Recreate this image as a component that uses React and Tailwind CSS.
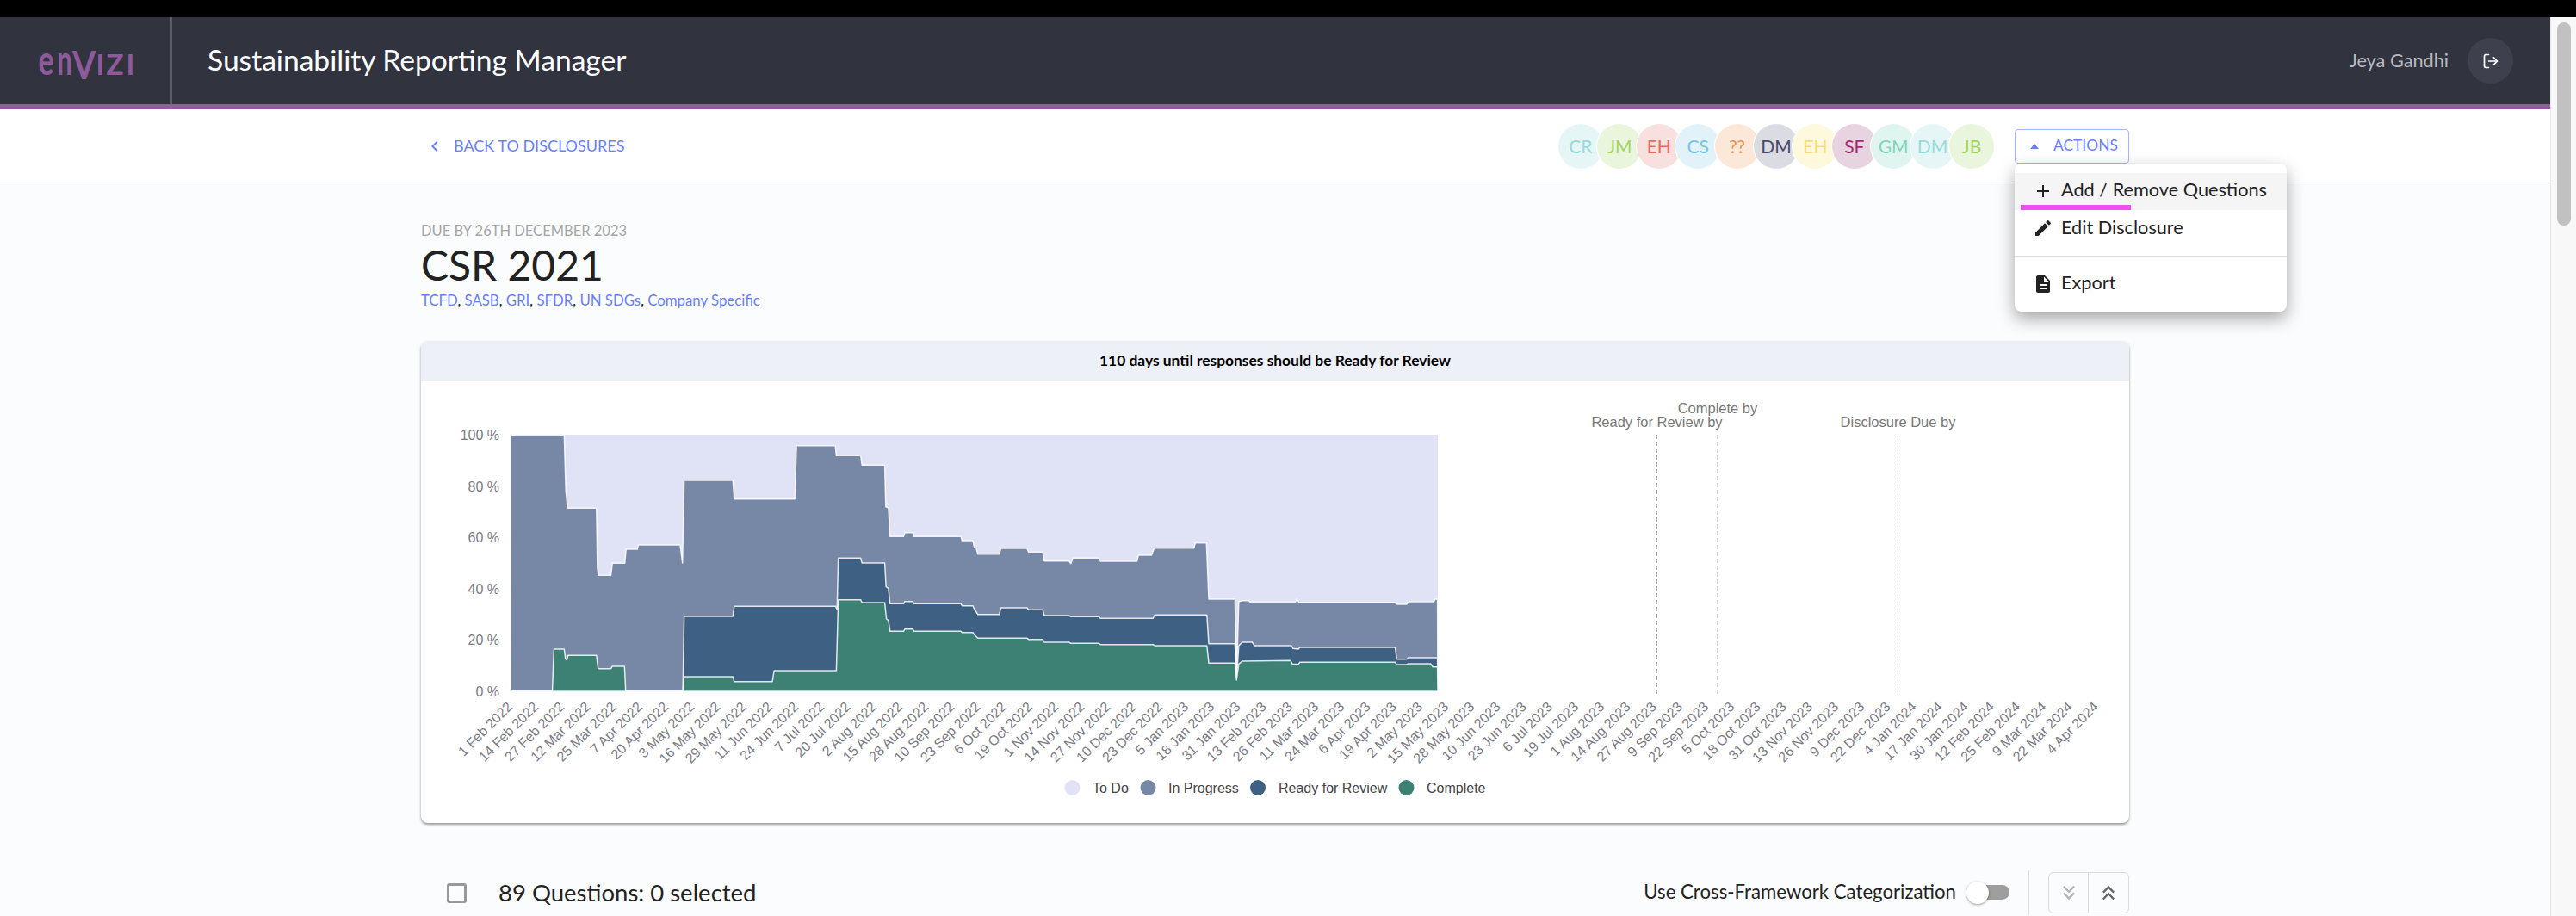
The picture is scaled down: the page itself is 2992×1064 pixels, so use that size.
import React from 'react';
import { LogOut } from 'lucide-react';
import { MdAdd, MdEdit, MdDescription, MdChevronLeft, MdKeyboardDoubleArrowDown, MdKeyboardDoubleArrowUp } from 'react-icons/md';

const avatars = [
    { initials: 'CR', className: 'bg-[#e6f6f7] text-[#95dbd9]' },
    { initials: 'JM', className: 'bg-[#e9f5dc] text-[#a2d45e]' },
    { initials: 'EH', className: 'bg-[#f7e0de] text-[#e96b5f]' },
    { initials: 'CS', className: 'bg-[#e1f2f8] text-[#77c4e4]' },
    { initials: '??', className: 'bg-[#fbe8d8] text-[#ef8e4c]' },
    { initials: 'DM', className: 'bg-[#dbdbe3] text-[#4a4a6a]' },
    { initials: 'EH', className: 'bg-[#fef8dd] text-[#fbdc7c]' },
    { initials: 'SF', className: 'bg-[#e8d3e0] text-[#a32a6f]' },
    { initials: 'GM', className: 'bg-[#e1f5f0] text-[#7fd6b8]' },
    { initials: 'DM', className: 'bg-[#e6f6f7] text-[#95dbd9]' },
    { initials: 'JB', className: 'bg-[#e9f5dc] text-[#a2d45e]' },
];

const frameworks = ['TCFD', 'SASB', 'GRI', 'SFDR', 'UN SDGs', 'Company Specific'];

// chart traces, measured off the picture; the first list of each runs up to mid Aug 2022
const left = ([x, y]) => [480 + x / 2.613, 480 + y / 3];
const right = ([x, y]) => [1000 + x / 2.24, 480 + y / 3];

const trace = (a, b) => [...a.map(left), ...b.map(right)];

const inProgress = trace(
    [[295, 76], [458, 76], [463, 270], [468, 331], [556, 331], [559, 540], [562, 565], [600, 565], [604, 523], [642, 523], [646, 474], [680, 474], [683, 459], [810, 459], [817, 522], [822, 234], [970, 234], [974, 299], [1158, 299], [1163, 113], [1281, 113], [1284, 148], [1358, 148], [1362, 181], [1431, 181], [1434, 326], [1442, 330], [1447, 430], [1488, 430], [1492, 416], [1516, 416], [1520, 430]],
    [[260, 430], [263, 444], [291, 444], [295, 468], [300, 470], [304, 491], [360, 491], [364, 471], [432, 471], [436, 484], [473, 484], [477, 515], [541, 515], [546, 524], [551, 505], [619, 505], [623, 516], [718, 516], [722, 495], [756, 495], [763, 470], [866, 470], [870, 452], [899, 452], [905, 648], [973, 648], [977, 930], [983, 657], [992, 653], [1008, 653], [1012, 658], [1130, 658], [1134, 648], [1140, 659], [1390, 659], [1394, 666], [1420, 666], [1424, 657], [1490, 657], [1494, 648], [1500, 648]]
);

const readyForReview = trace(
    [[295, 970], [818, 970], [822, 708], [970, 708], [974, 673], [1282, 673], [1286, 685], [1290, 505], [1358, 505], [1362, 522], [1431, 522], [1435, 605], [1442, 610], [1447, 664], [1488, 664], [1492, 656], [1516, 656], [1520, 664]],
    [[260, 664], [263, 671], [291, 671], [295, 682], [304, 701], [360, 701], [364, 678], [432, 678], [436, 685], [473, 685], [477, 705], [541, 705], [546, 709], [619, 709], [623, 715], [760, 715], [764, 703], [900, 703], [905, 803], [973, 803], [977, 930], [983, 810], [992, 798], [1018, 798], [1024, 810], [1120, 810], [1124, 820], [1138, 822], [1142, 816], [1390, 816], [1394, 857], [1420, 857], [1424, 852], [1500, 852]]
);

const complete = trace(
    [[295, 970], [422, 970], [427, 822], [458, 822], [462, 855], [466, 860], [470, 844], [556, 844], [561, 890], [600, 890], [604, 882], [641, 882], [645, 970], [818, 970], [822, 918], [970, 918], [974, 935], [1090, 935], [1095, 897], [1284, 897], [1290, 650], [1358, 650], [1362, 660], [1431, 660], [1436, 717], [1442, 722], [1447, 760], [1488, 760], [1492, 752], [1516, 752], [1520, 760]],
    [[260, 760], [263, 764], [291, 764], [295, 772], [304, 784], [432, 784], [436, 788], [473, 788], [477, 798], [541, 798], [546, 802], [619, 802], [623, 806], [760, 806], [764, 810], [900, 810], [905, 871], [973, 871], [977, 930], [983, 874], [992, 864], [1118, 862], [1122, 874], [1138, 875], [1142, 868], [1390, 868], [1394, 876], [1420, 876], [1424, 873], [1482, 873], [1488, 884], [1500, 884]]
);

const areaPath = (points) =>
    `M${points.map(([x, y]) => `${x.toFixed(1)} ${y.toFixed(1)}`).join('L')}L1670 803L593 803Z`;

const series = [
    { name: 'In Progress', color: '#7787a6', points: inProgress },
    { name: 'Ready for Review', color: '#3d6083', points: readyForReview },
    { name: 'Complete', color: '#3c8174', points: complete },
];

const legend = [
    { name: 'To Do', color: '#e0e3f5', cx: 1245.5, tx: 1269 },
    { name: 'In Progress', color: '#7787a6', cx: 1333.5, tx: 1357 },
    { name: 'Ready for Review', color: '#3d6083', cx: 1461, tx: 1485 },
    { name: 'Complete', color: '#3c8174', cx: 1633.5, tx: 1657 },
];

const deadlines = [
    { name: 'Ready for Review by', x: 1924.5, y: 496 },
    { name: 'Complete by', x: 1995, y: 480 },
    { name: 'Disclosure Due by', x: 2204.5, y: 496 },
];

const MONTHS = ['Jan', 'Feb', 'Mar', 'Apr', 'May', 'Jun', 'Jul', 'Aug', 'Sep', 'Oct', 'Nov', 'Dec'];

// one label every 13 days from 1 Feb 2022
const ticks = Array.from({ length: 62 }, (_, i) => {
    const d = new Date(Date.UTC(2022, 1, 1 + i * 13));
    return `${d.getUTCDate()} ${MONTHS[d.getUTCMonth()]} ${d.getUTCFullYear()}`;
});

const Chart = () => (
    <svg viewBox="489 442 1984 514" className="block w-full h-[514px] font-['Liberation_Sans',sans-serif] text-[16px]">
        <rect x="593" y="505" width="1077" height="298" fill="#e0e3f5" />
        {series.map(s => (
            <path key={s.name} d={areaPath(s.points)} fill={s.color} stroke="#fff" strokeOpacity="0.85" strokeWidth="1.5" strokeLinejoin="round" />
        ))}
        {[0, 20, 40, 60, 80, 100].map(v => (
            <text key={v} x="580" y={803 - v * 2.98 + 6} textAnchor="end" fill="#7b7b85">{v} %</text>
        ))}
        {ticks.map((label, i) => {
            const x = 596 + i * 30.2;
            return (
                <text key={label} x={x} y="822" textAnchor="end" fill="#7b7b85" transform={`rotate(-45 ${x} 822)`}>{label}</text>
            );
        })}
        {deadlines.map(d => (
            <g key={d.name}>
                <line x1={d.x} x2={d.x} y1="505" y2="806" stroke="#a8a8a8" strokeWidth="1" strokeDasharray="5 3" />
                <text x={d.x} y={d.y} textAnchor="middle" fill="#777" className="text-[16.5px]">{d.name}</text>
            </g>
        ))}
        {legend.map(l => (
            <g key={l.name}>
                <circle cx={l.cx} cy="915" r="9" fill={l.color} />
                <text x={l.tx} y="921" fill="#444">{l.name}</text>
            </g>
        ))}
    </svg>
);

const Logo = () => (
    <div className="w-[198px] h-full flex items-baseline pl-[43px] pt-[26px] text-[#8e5a9c] font-bold leading-none">
        <span className="w-[21px] flex justify-center text-[47px] scale-x-[0.72]">e</span>
        <span className="w-[22px] flex justify-center text-[47px] scale-x-[0.65]">n</span>
        <span className="w-[23px] flex justify-center text-[46px] scale-x-[0.85] translate-y-[5px]">V</span>
        <span className="w-[15px] flex justify-center text-[33px]">I</span>
        <span className="w-[19px] flex justify-center text-[33px]">Z</span>
        <span className="w-[17px] flex justify-center text-[33px]">I</span>
    </div>
);

const App = () => {
    return (
        <div className="w-[2992px] h-[1064px] overflow-hidden flex flex-col bg-black font-['Lato',sans-serif]">
            <div className="h-[20px] shrink-0 bg-black"></div>
            <div className="flex-1 min-h-0 flex">
                <div className="w-[2962px] flex flex-col overflow-hidden bg-[#fbfcfe]">
                    {/* Top bar */}
                    <header className="h-[107px] shrink-0 bg-[#31333f] border-b-[6px] border-[#925d9d] flex items-center">
                        <Logo />
                        <div className="w-[2px] h-full bg-[#5a5c68]"></div>
                        <h1 className="ml-[41px] -mt-[2px] text-[33.6px] text-white font-normal">Sustainability Reporting Manager</h1>
                        <span className="ml-auto -mt-[1px] text-[21.7px] text-[#b8bac0]">Jeya Gandhi</span>
                        <button className="ml-[22px] mr-[43px] w-[53px] h-[53px] rounded-full bg-[#3f404d] flex items-center justify-center">
                            <LogOut size={20} color="#fff" strokeWidth={2} />
                        </button>
                    </header>

                    {/* Sub navigation */}
                    <div className="h-[86px] shrink-0 bg-white border-b border-[#e2e2e2]">
                        <div className="w-[1984px] h-full mx-auto flex items-center">
                            <a className="flex items-center text-[18px] text-[#6a80ff] pl-[6px]">
                                <MdChevronLeft size={24} className="-ml-[2px]" />
                                <span className="ml-[10px]">BACK TO DISCLOSURES</span>
                            </a>
                            <div className="ml-auto flex items-center">
                                {avatars.map((a, i) => (
                                    <div
                                        key={i}
                                        className={`w-[52px] h-[52px] -ml-[6.6px] rounded-full flex items-center justify-center text-[21px] ring-1 ring-white ${a.className}`}
                                    >
                                        {a.initials}
                                    </div>
                                ))}
                            </div>
                            <div className="relative ml-[24px]">
                                <button className="w-[133px] h-[40px] border border-[#a5b2ff] rounded-[4px] flex items-center text-[17.4px] text-[#6a80ff] bg-white">
                                    <span className="ml-[17px] w-0 h-0 border-x-[5px] border-x-transparent border-b-[6px] border-b-[#6a80ff]"></span>
                                    <span className="ml-[17px]">ACTIONS</span>
                                </button>
                                <div className="absolute top-full left-0 z-10 w-[316px] h-[172px] bg-white rounded-[8px] shadow-[0_8px_20px_rgba(0,0,0,0.35)] pt-[11px] text-[21.7px] text-[#222]">
                                    <div className="relative h-[43px] bg-[#f5f5f5] flex items-center pl-[21px]">
                                        <MdAdd size={24} />
                                        <span className="ml-[9px] -mt-[3px]">Add / Remove Questions</span>
                                        <div className="absolute left-[7px] bottom-0 w-[128px] h-[6px] bg-[#ef4fef]"></div>
                                    </div>
                                    <div className="h-[43px] flex items-center pl-[21px]">
                                        <MdEdit size={24} />
                                        <span className="ml-[9px] -mt-[2px]">Edit Disclosure</span>
                                    </div>
                                    <div className="h-px mt-[10px] bg-[#e0e0e0]"></div>
                                    <div className="h-[43px] mt-[11px] flex items-center pl-[21px]">
                                        <MdDescription size={24} />
                                        <span className="ml-[9px] -mt-[3px]">Export</span>
                                    </div>
                                </div>
                            </div>
                        </div>
                    </div>

                    {/* Body */}
                    <main className="w-[1984px] mx-auto pt-[43px]">
                        <p className="h-[24px] leading-[24px] text-[16.5px] text-[#a5a5a5]">DUE BY 26TH DECEMBER 2023</p>
                        <h2 className="h-[56px] leading-[56px] text-[48px] text-[#222] font-normal">CSR 2021</h2>
                        <p className="h-[28px] leading-[26px] text-[16.8px] text-[#222]">
                            {frameworks.map((f, i) => (
                                <span key={f}>
                                    <span className="text-[#6a80ff]">{f}</span>
                                    {i < frameworks.length - 1 ? ', ' : ''}
                                </span>
                            ))}
                        </p>

                        <section className="mt-[32px] h-[560px] bg-white rounded-[8px] overflow-hidden shadow-[0_2px_3px_rgba(0,0,0,0.4)]">
                            <div className="h-[46px] bg-[#edf0f7] flex items-center justify-center text-[17.4px] font-bold text-black">
                                110 days until responses should be Ready for Review
                            </div>
                            <Chart />
                        </section>

                        <div className="mt-[57px] h-[48px] flex items-center pl-[30px]">
                            <span className="w-[23px] h-[23px] border-[3px] border-[#999] rounded-[3px]"></span>
                            <span className="ml-[37px] text-[27.5px] text-[#222]">89 Questions: 0 selected</span>
                            <span className="ml-auto -mt-[3px] text-[22.2px] text-[#222]">Use Cross-Framework Categorization</span>
                            <div className="relative ml-[25px] -mt-[2px] w-[37px] h-[17px] rounded-full bg-[#9e9e9e]">
                                <span className="absolute -left-[13px] -top-[4px] w-[26px] h-[26px] rounded-full bg-white shadow-[0_1px_3px_rgba(0,0,0,0.4)]"></span>
                            </div>
                            <div className="ml-[22px] w-px h-[52px] bg-[#dcdcdc]"></div>
                            <div className="ml-[22px] flex h-[48px] border border-[#dcdcdc] rounded-[6px]">
                                <div className="w-[46px] flex items-center justify-center border-r border-[#dcdcdc] text-[#b5b5b5]">
                                    <MdKeyboardDoubleArrowDown size={28} />
                                </div>
                                <div className="w-[46px] flex items-center justify-center text-[#666]">
                                    <MdKeyboardDoubleArrowUp size={28} />
                                </div>
                            </div>
                        </div>
                    </main>
                </div>

                {/* Scrollbar */}
                <div className="w-[30px] shrink-0 bg-[#f8f8f8] border-l border-[#e8e8e8] pt-[6px] pl-[7px]">
                    <div className="w-[16px] h-[236px] rounded-full bg-[#c1c1c1]"></div>
                </div>
            </div>
        </div>
    );
};

export default App;
